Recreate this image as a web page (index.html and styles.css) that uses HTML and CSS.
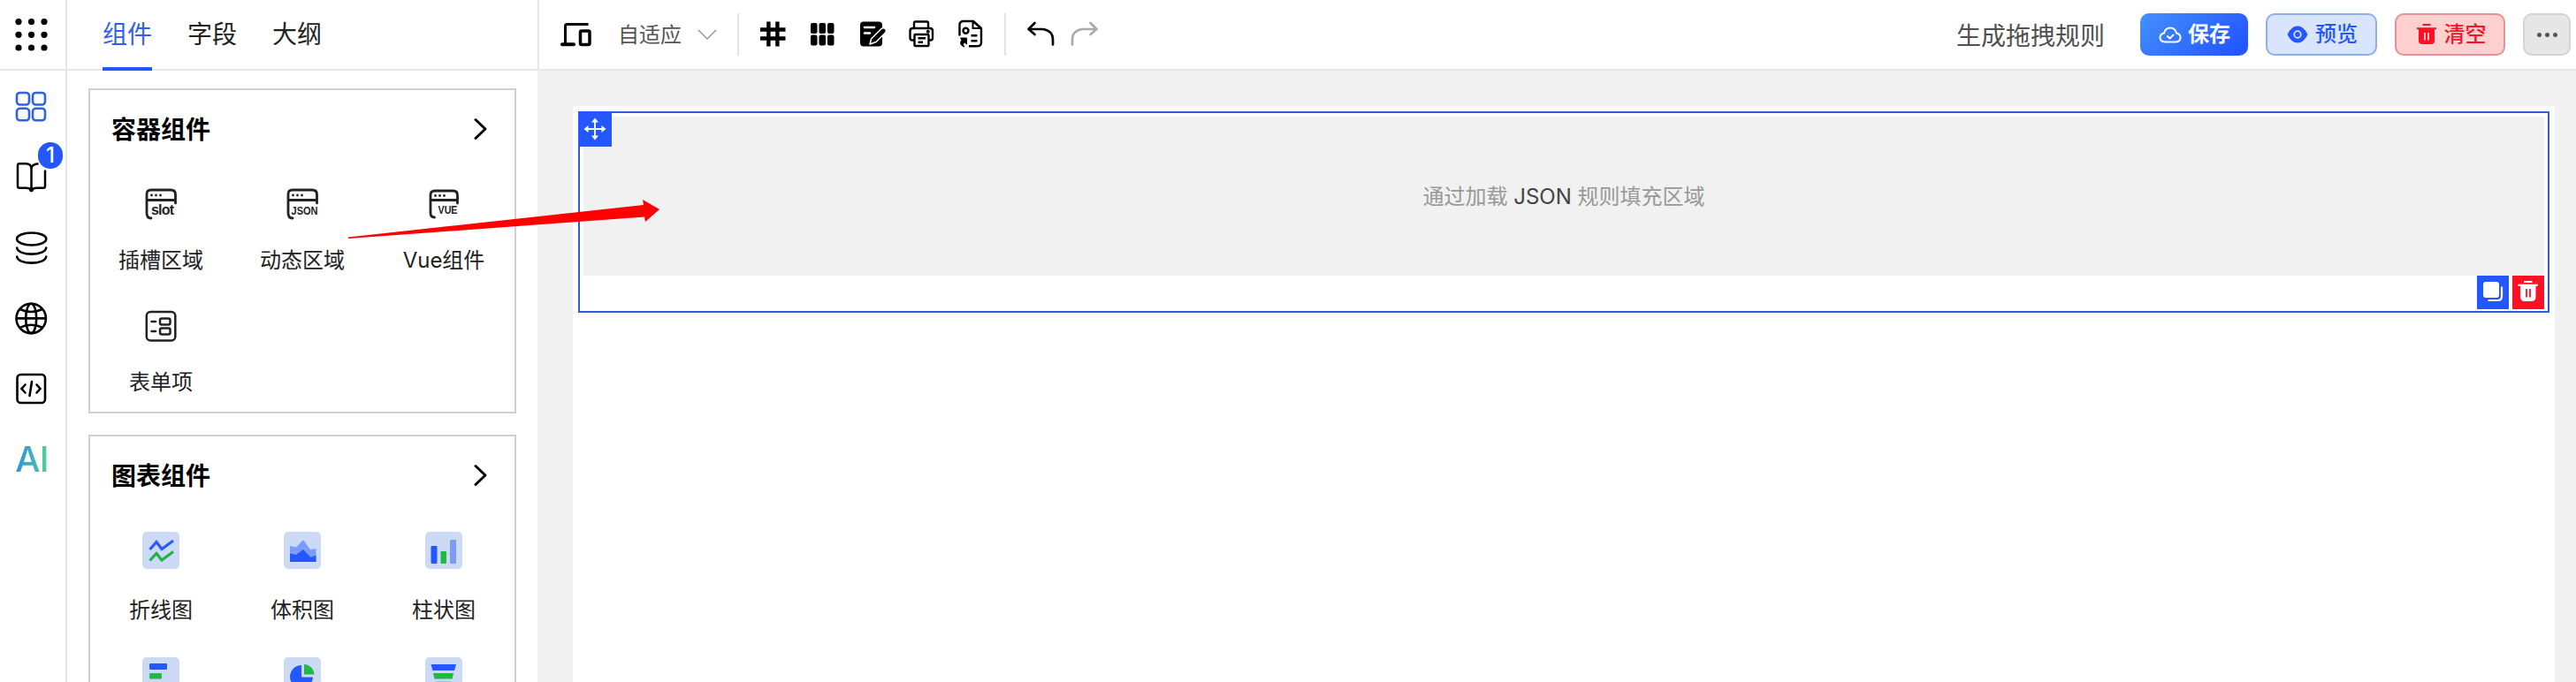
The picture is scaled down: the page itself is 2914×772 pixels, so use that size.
FILE: index.html
```html
<!DOCTYPE html>
<html lang="zh-CN">
<head>
<meta charset="utf-8">
<title>表单设计器</title>
<link rel="stylesheet" href="styles.css">
</head>
<body>
<div class="app">
  <header class="header">
    <div class="apps">
      <svg width="40" height="40" viewBox="0 0 40 40"><g fill="#000"><circle cx="6" cy="5.6" r="3.6"/><circle cx="20.500" cy="5.6" r="3.6"/><circle cx="35" cy="5.6" r="3.6"/><circle cx="6" cy="20.300" r="3.6"/><circle cx="20.500" cy="20.3" r="3.6"/><circle cx="35" cy="20.3" r="3.6"/><circle cx="6" cy="35" r="3.6"/><circle cx="20.500" cy="35" r="3.6"/><circle cx="35" cy="35" r="3.6"/></g></svg>
    </div>
    <nav class="tabs">
      <a class="tab active">组件</a>
      <a class="tab">字段</a>
      <a class="tab">大纲</a>
    </nav>
    <div class="toolbar">
      <svg class="device" width="40" height="40" viewBox="0 0 40 40" fill="none" stroke="#000" stroke-width="3"><path d="M33.500 8.500H9.500Q7.500 8.500 7.500 10.500V31" /><path d="M4 31.300H17" stroke-width="4" stroke-linecap="round"/><rect x="24.500" y="16" width="10.500" height="15.500" rx="1.500" stroke-width="3.500"/></svg>
      <span class="fit">自适应</span>
      <svg class="caret" width="24" height="24" viewBox="0 0 24 24" fill="none" stroke="#999" stroke-width="1.500"><path d="M2 7L12 17L22 7"/></svg>
      <i class="divider"></i>
      <div class="tools">
        <svg width="40" height="40" viewBox="0 0 40 40" fill="none" stroke="#000" stroke-width="4.400"><path d="M15.400 5.500V33.500M25.400 5.500V33.500M6 14.500H34.500M6 24.500H34.500"/></svg>
        <svg width="40" height="40" viewBox="0 0 40 40"><g fill="#000"><rect x="7" y="7" width="7.500" height="12" rx="2"/><rect x="16.500" y="7" width="7.500" height="12" rx="2"/><rect x="26" y="7" width="7.500" height="12" rx="2"/><rect x="7" y="20.500" width="7.500" height="12" rx="2"/><rect x="16.500" y="20.500" width="7.500" height="12" rx="2"/><rect x="26" y="20.500" width="7.500" height="12" rx="2"/></g></svg>
        <svg width="40" height="40" viewBox="0 0 40 40"><rect x="7" y="5.500" width="25" height="28" rx="4" fill="#000"/><path d="M12 12H23M12 18.500H18" stroke="#fff" stroke-width="2.600" stroke-linecap="round"/><path d="M18 31L19.500 25L31 13.500Q33.500 12 35.500 13.500Q37.500 15.500 35.500 18L25 28.500Z" fill="#000" stroke="#fff" stroke-width="1.500" stroke-linejoin="round"/></svg>
        <svg width="40" height="40" viewBox="0 0 40 40" fill="none" stroke="#000" stroke-width="2.400" stroke-linejoin="round"><path d="M12 13V7Q12 5.500 13.500 5.500H26.500Q28 5.500 28 7V13"/><path d="M12 26.500H10Q7.500 26.500 7.500 24V16Q7.500 13 10.500 13H30Q33 13 33 16V24Q33 26.500 30.500 26.500H28.500"/><rect x="12.500" y="20" width="16" height="13" rx="1"/><path d="M16.500 24.200H25M16.500 28.700H22"/><circle cx="27.800" cy="16.800" r=".8"/></svg>
        <svg width="40" height="40" viewBox="0 0 40 40" fill="none" stroke="#000" stroke-width="2.400" stroke-linejoin="round"><path d="M7.500 21.500V8.500Q8 5 12 5H23L32 13V29Q32 33.200 28 33.200H18"/><path d="M22.500 5V13H31.500Z" stroke-width="2"/><circle cx="14.500" cy="15.700" r="3"/><path d="M20.500 21.300H27.500M20.500 27.300H27.500"/><path d="M8.500 24H15.500V31L13.200 29Q10 30.500 13 34Q6 32 10 26Z" fill="#000" stroke-width="1"/></svg>
      </div>
      <i class="divider second"></i>
      <svg class="undo" width="40" height="40" viewBox="0 0 40 40" fill="none" stroke="#000" stroke-width="2.700" stroke-linecap="round" stroke-linejoin="round"><path d="M13.500 7L6.500 14L13.500 20M7 14H22.500Q34 15.500 34 26V31.500"/></svg>
      <svg class="redo" width="40" height="40" viewBox="0 0 40 40" fill="none" stroke="#aaa" stroke-width="2.700" stroke-linecap="round" stroke-linejoin="round"><path d="M27.500 7L34.500 14L27.500 20M34 14H18.500Q7 15.500 7 26V31.500"/></svg>
      <span class="doc-title">生成拖拽规则</span>
      <div class="actions">
        <button class="btn primary"><svg width="28" height="28" viewBox="0 0 28 28" fill="none" stroke="#fff" stroke-width="2" stroke-linecap="round" stroke-linejoin="round"><path d="M8 22.500Q2.500 22 2.500 17.500Q2.500 13.500 7 12.500Q8.500 6.500 14 6.500Q19.500 6.500 21 12.500Q25.500 13.500 25.500 17.500Q25.500 22 20.500 22.500Z"/><path d="M10.800 16L13.500 18.500L17.500 14.500"/></svg>保存</button>
        <button class="btn info"><svg width="28" height="28" viewBox="0 0 28 28"><path d="M2.500 14Q7 4.500 14 4.500Q21 4.500 25.500 14Q21 23.500 14 23.500Q7 23.500 2.500 14Z" fill="#2457ff"/><circle cx="14" cy="14" r="3.800" fill="none" stroke="#d9e4ff" stroke-width="1.800"/></svg>预览</button>
        <button class="btn danger"><svg width="28" height="28" viewBox="0 0 28 28"><path d="M9.500 3H18.500M3 7.200H25" stroke="#ff1125" stroke-width="2"/><path d="M5 7H23V21Q23 25 19 25H9Q5 25 5 21Z" fill="#ff1125"/><path d="M12 12V20.500M16 12V20.500" stroke="#ffd0d0" stroke-width="1.800"/></svg>清空</button>
        <button class="btn more"><i></i><i></i><i></i></button>
      </div>
    </div>
  </header>

  <div class="body">
    <aside class="rail">
      <a><svg width="40" height="40" viewBox="0 0 40 40" fill="none" stroke="#2f60ea" stroke-width="2.600"><rect x="4" y="5" width="14" height="13.500" rx="3.500"/><rect x="22" y="5" width="14" height="13.500" rx="3.500"/><rect x="4" y="22.800" width="14" height="13.500" rx="3.500"/><rect x="22" y="22.800" width="14" height="13.500" rx="3.500"/></svg></a>
      <a><svg width="40" height="40" viewBox="0 0 40 40" fill="none" stroke="#000" stroke-width="2.500" stroke-linejoin="round"><path d="M20.500 35.500Q18.500 32.800 14.500 32.800H7Q5 32.800 5 30.800V7.500Q5 5.300 7 5.300H14Q20.500 5.300 20.500 11V35.500Q22.500 32.800 26.500 32.800H34Q36 32.800 36 30.800V12.500M20.500 11Q20.500 6 28.500 5.300"/><circle cx="20.500" cy="35" r="1.200" fill="#000"/></svg><b class="badge">1</b></a>
      <a><svg width="40" height="40" viewBox="0 0 40 40" fill="none" stroke="#000" stroke-width="2.600" stroke-linecap="round"><ellipse cx="20.700" cy="10.500" rx="16.600" ry="7"/><path d="M4.200 20.500C5 30 36.300 30 37.200 20.500M4.200 30.500C5 40 36.300 40 37.200 30.500"/></svg></a>
      <a><svg width="40" height="40" viewBox="0 0 40 40" fill="none" stroke="#000" stroke-width="2.600"><circle cx="20.200" cy="20.400" r="16.700"/><ellipse cx="20.200" cy="20.400" rx="6" ry="16.700"/><path d="M3.500 20.400H37M7.500 10Q20 16 33 10M7.500 30.800Q20 24.800 33 30.800"/></svg></a>
      <a><svg width="40" height="40" viewBox="0 0 40 40" fill="none" stroke="#000" stroke-width="2.600" stroke-linecap="round"><rect x="4.500" y="4" width="31.500" height="32" rx="4"/><path d="M21 12L18.500 28M13.500 15.500L9.500 20L13.500 24.500M26.500 15.500L30.500 20L26.500 24.500"/></svg></a>
      <a><span class="ai">AI</span></a>
    </aside>

    <section class="panel">
      <div class="card">
        <h3><span>容器组件</span><svg width="24" height="32" viewBox="0 0 24 32" fill="none" stroke="#000" stroke-width="3" stroke-linecap="round" stroke-linejoin="round"><path d="M6 5.500L17 16L6 26.500"/></svg></h3>
        <div class="grid">
          <div class="item"><svg width="42" height="42" viewBox="0 0 42 42" fill="none" stroke="#222" stroke-width="2.800" stroke-linecap="round"><path d="M10 37Q5 37 5 31V10Q5 5 10 5H32Q37.500 5 37.500 10V20M5 16.500H37"/><path d="M10.500 11h.01M15.500 11h.01M20.500 11h.01"/><text class="glyph" x="10" y="32.500" textLength="26">slot</text></svg><span>插槽区域</span></div>
          <div class="item"><svg width="42" height="42" viewBox="0 0 42 42" fill="none" stroke="#222" stroke-width="2.800" stroke-linecap="round"><path d="M10 37Q5 37 5 31V10Q5 5 10 5H32Q37.500 5 37.500 10V20M5 16.500H37"/><path d="M10.500 11h.01M15.500 11h.01M20.500 11h.01"/><text class="glyph small" x="8.500" y="32.500" textLength="30" lengthAdjust="spacingAndGlyphs">JSON</text></svg><span>动态区域</span></div>
          <div class="item"><svg width="42" height="42" viewBox="0 0 42 42" fill="none" stroke="#222" stroke-width="2.800" stroke-linecap="round"><path d="M10.500 36Q6 36 6 31V11Q6 6 11 6H31.500Q36.500 6 36.500 11V20M6 16.500H36.500"/><path d="M11.500 11.500h.01M16.500 11.500h.01M21.500 11.500h.01"/><text class="glyph small" x="14.500" y="32" textLength="22" lengthAdjust="spacingAndGlyphs">VUE</text></svg><span>Vue组件</span></div>
          <div class="item"><svg width="42" height="42" viewBox="0 0 42 42" fill="none" stroke="#222" stroke-width="2.500" stroke-linecap="round"><rect x="4.800" y="5" width="32.500" height="32.500" rx="4.500"/><rect x="20" y="12.500" width="11.500" height="7" rx="2"/><rect x="20" y="23.500" width="11.500" height="7" rx="2"/><path d="M10.500 16H15M10.500 27H15"/></svg><span>表单项</span></div>
        </div>
      </div>
      <div class="card charts">
        <h3><span>图表组件</span><svg width="24" height="32" viewBox="0 0 24 32" fill="none" stroke="#000" stroke-width="3" stroke-linecap="round" stroke-linejoin="round"><path d="M6 5.500L17 16L6 26.500"/></svg></h3>
        <div class="grid">
          <div class="item"><svg width="42" height="42" viewBox="0 0 42 42"><rect width="42" height="42" rx="5" fill="#ccdaf5"/><g fill="none" stroke-width="3.200"><path d="M8.500 20L16 11.500L22 19.500L35 10" stroke="#2b5cf6"/><path d="M8.500 32.500L16 24.500L22 32L35 22.500" stroke="#21b34b"/></g></svg><span>折线图</span></div>
          <div class="item"><svg width="42" height="42" viewBox="0 0 42 42"><rect width="42" height="42" rx="5" fill="#ccdaf5"/><path d="M7 16L14 17.500L22 9L30 20L36.500 19V34H7Z" fill="#7c9bfa"/><path d="M7 24.500L14 26L22 20L30.500 29L36.500 26.500V34H7Z" fill="#2457ff"/></svg><span>体积图</span></div>
          <div class="item"><svg width="42" height="42" viewBox="0 0 42 42"><rect width="42" height="42" rx="5" fill="#ccdaf5"/><rect x="6.500" y="16" width="7" height="20" rx="1" fill="#2457ff"/><rect x="17.500" y="22" width="6.500" height="14" rx="1" fill="#21b845"/><rect x="28" y="9" width="7" height="27" rx="1" fill="#7c9bfa"/></svg><span>柱状图</span></div>
          <div class="item"><svg width="42" height="42" viewBox="0 0 42 42"><rect width="42" height="42" rx="5" fill="#ccdaf5"/><rect x="8" y="7" width="20" height="7" rx="1" fill="#2457ff"/><rect x="8" y="18" width="14" height="6.500" rx="1" fill="#21b845"/><rect x="8" y="28.500" width="26" height="7" rx="1" fill="#7c9bfa"/></svg></div>
          <div class="item"><svg width="42" height="42" viewBox="0 0 42 42"><rect width="42" height="42" rx="5" fill="#ccdaf5"/><path d="M20 9V22.500H33A13 13 0 1 1 20 9Z" fill="#2457ff"/><path d="M23 8A12 12 0 0 1 34.500 19.500H23Z" fill="#21b845"/></svg></div>
          <div class="item"><svg width="42" height="42" viewBox="0 0 42 42"><rect width="42" height="42" rx="5" fill="#ccdaf5"/><path d="M6.500 8H35L33 15H8.500Z" fill="#2457ff"/><path d="M9 18H32L30.500 24.500H10.500Z" fill="#21b845"/><path d="M12 27.500H29L27 34H14Z" fill="#7c9bfa"/></svg></div>
        </div>
      </div>
    </section>

    <main class="canvas">
      <div class="page">
        <div class="selected">
          <div class="dropzone"><p>通过加载 <em>JSON</em> 规则填充区域</p></div>
          <div class="handle"><svg width="28" height="28" viewBox="0 0 28 28"><path d="M14 5V23M5 14H23" stroke="#fff" stroke-width="1.800"/><path d="M14 1.500L18 6.500H10ZM14 26.500L18 21.500H10ZM1.500 14L6.500 10V18ZM26.500 14L21.500 10V18Z" fill="#fff"/></svg></div>
          <div class="ops">
            <span class="op copy"><svg width="28" height="28" viewBox="0 0 28 28"><rect x="3" y="2" width="18" height="18" rx="3" fill="#fff"/><path d="M24 7.500V18.500Q24 23 19.500 23H8.500" fill="none" stroke="#fff" stroke-width="2.200"/></svg></span>
            <span class="op del"><svg width="28" height="28" viewBox="0 0 28 28"><path d="M9 2H18.500M2.500 5.800H25" stroke="#fff" stroke-width="2"/><path d="M5 6H22.500V19Q22.500 24 17.500 24H10Q5 24 5 19Z" fill="#fff"/><path d="M12 10V19.500M16 10V19.500" stroke="#ff1125" stroke-width="1.800"/></svg></span>
          </div>
        </div>
      </div>
    </main>
  </div>
  <svg class="arrow" width="356" height="44" viewBox="0 0 356 44"><path d="M0 42.500L334 6L333 0L352 11L336 25L335 19.500L0 44Z" fill="#f00"/></svg>
</div>
</body>
</html>
```
FILE: styles.css
```css
* { box-sizing: border-box; }
body {
  margin: 0;
  font-family: Inter, "Noto Sans CJK SC", sans-serif;
  font-size: 24px;
  color: #222;
  background: #fff;
}
svg { display: block; flex: none; overflow: visible; }
.app {
  position: relative;
  display: flex;
  flex-direction: column;
  width: 100%;
  height: 772px;
  overflow: hidden;
}
.header {
  display: flex;
  flex: none;
  height: 80px;
  border-bottom: 2px solid #e6e6e6;
}
.apps {
  width: 76px;
  padding: 19px 0 0 15px;
  border-right: 2px solid #e6e6e6;
}
.tabs {
  display: flex;
  gap: 40px;
  width: 532px;
  padding-left: 40px;
}
.tab {
  height: 80px;
  font-size: 28px;
  line-height: 78px;
  border-bottom: 4px solid transparent;
}
.tab.active { color: #2f60ea; border-bottom-color: #2457ff; }
.toolbar {
  display: flex;
  flex: 1;
  align-items: center;
  padding: 0 6px 0 22px;
  border-left: 2px solid #e6e6e6;
}
.fit { margin-left: 27px; padding-bottom: 3px; color: #555; }
.caret { margin-left: 17px; }
.divider {
  width: 2px;
  height: 48px;
  margin-left: 22px;
  background: #e2e2e2;
}
.tools { display: flex; gap: 16px; margin-left: 18px; }
.divider.second { margin-left: 18px; }
.undo { margin-left: 19px; }
.redo { margin-left: 9px; }
.doc-title { margin-left: auto; font-size: 28px; color: #505050; }
.actions { display: flex; gap: 20px; margin-left: 40px; }
.btn {
  display: flex;
  align-items: center;
  justify-content: center;
  gap: 6px;
  width: 126px;
  height: 48px;
  padding: 0;
  border: 2px solid;
  border-radius: 10px;
  font: 500 24px/1 Inter, "Noto Sans CJK SC", sans-serif;
}
.primary {
  width: 122px;
  border: 0;
  color: #fff;
  font-weight: 700;
  background: linear-gradient(135deg, #4490ff 0%, #2457ff 90%);
}
.info { color: #2457ff; background: #d9e4ff; border-color: #8faeec; }
.danger { width: 125px; color: #ff1125; background: #ffd0d0; border-color: #ea8f93; }
.more { width: 54px; gap: 4px; background: #e6e6e6; border-color: #d4d4d4; }
.more i { width: 5px; height: 5px; border-radius: 50%; background: #555; }

.body { display: flex; flex: 1; min-height: 0; }
.rail {
  display: flex;
  flex: none;
  flex-direction: column;
  width: 76px;
  border-right: 2px solid #e6e6e6;
}
.rail a {
  position: relative;
  display: flex;
  flex: none;
  align-items: center;
  width: 70px;
  height: 80px;
  justify-content: center;
}
.badge {
  position: absolute;
  top: 1px;
  left: 43px;
  width: 28px;
  height: 30px;
  border-radius: 15px;
  background: #2457ff;
  color: #fff;
  font-size: 24px;
  font-weight: 500;
  line-height: 30px;
  text-align: center;
}
.ai {
  margin-left: 2px;
  font-size: 40px;
  font-weight: 500;
  line-height: 1;
  letter-spacing: -1px;
  background: linear-gradient(90deg, #2f8fdc, #55d09a);
  -webkit-background-clip: text;
  background-clip: text;
  color: transparent;
}
.panel {
  display: flex;
  flex: none;
  flex-direction: column;
  gap: 24px;
  width: 532px;
  padding: 20px 24px 0;
  overflow: hidden;
}
.card { flex: none; border: 2px solid #d0d0d0; }
.card h3 {
  display: flex;
  align-items: center;
  justify-content: space-between;
  height: 88px;
  margin: 0;
  padding: 0 26px 0 24px;
  color: #000;
  font-size: 28px;
  font-weight: 700;
}
.card h3 span { padding-bottom: 3px; }
.grid { display: grid; grid-template-columns: repeat(3, 1fr); }
.item {
  display: flex;
  flex-direction: column;
  align-items: center;
  height: 138px;
  padding-top: 20px;
}
.item span { margin-top: 25px; line-height: 36px; }
.charts .item { height: 142px; }
.charts .item span { margin-top: 29px; }
.glyph { font: 700 16px "Liberation Sans", sans-serif; fill: #222; stroke: none; }
.glyph.small { font-size: 13.500px; }

.canvas {
  display: flex;
  flex: 1;
  padding: 40px 24px 0 40px;
  background: #f1f1f1;
}
.page { flex: 1; padding: 6px; background: #fff; }
.selected {
  position: relative;
  height: 228px;
  padding: 4px;
  border: 2px solid #2f5bdc;
}
.dropzone {
  display: flex;
  align-items: center;
  justify-content: center;
  height: 180px;
  background: #f1f1f1;
  color: #999;
}
.dropzone p { margin: 0; padding-bottom: 3px; }
.dropzone em { color: #444; font-style: normal; }
.handle {
  position: absolute;
  top: -2px;
  left: -2px;
  display: flex;
  align-items: center;
  justify-content: center;
  width: 38px;
  height: 40px;
  background: #2457ff;
}
.ops { display: flex; justify-content: flex-end; gap: 4px; }
.op {
  display: flex;
  align-items: center;
  justify-content: center;
  width: 36px;
  height: 38px;
}
.copy { background: #2457ff; }
.del { background: #ff1125; }
.arrow { position: absolute; top: 226px; left: 394px; }
```
